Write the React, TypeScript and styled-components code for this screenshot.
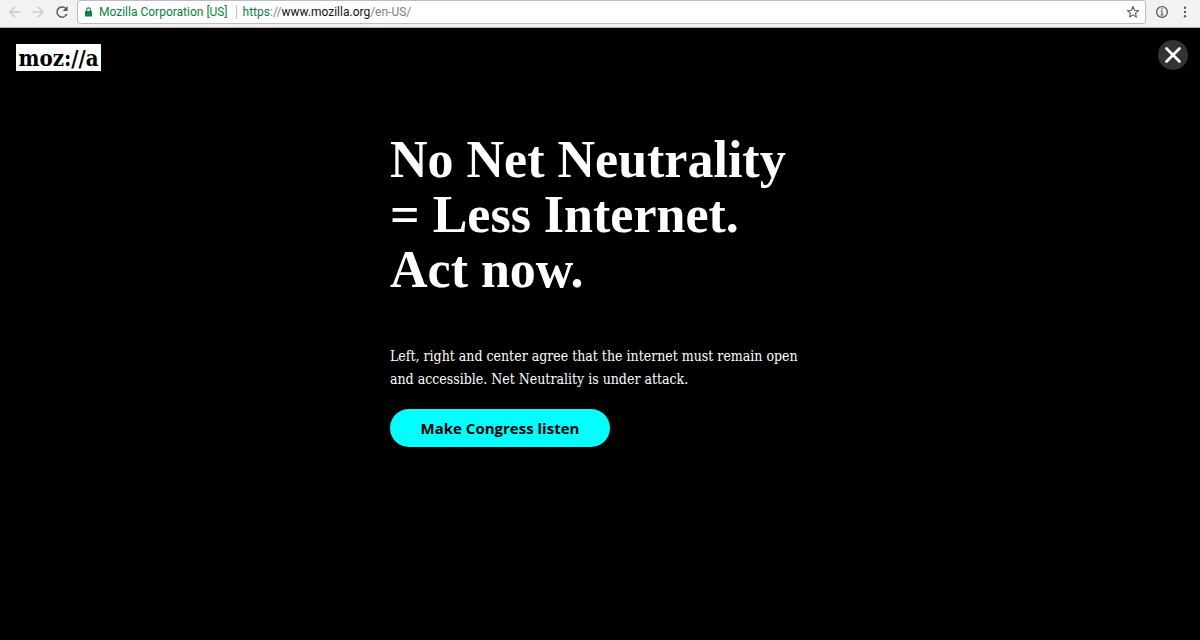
import React from "react";
import styled, { createGlobalStyle } from "styled-components";

const GlobalStyle = createGlobalStyle`
  * { box-sizing: border-box; }
  body { margin: 0; background: #000; }
  button { font: inherit; cursor: pointer; }
`;

const Page = styled.div`
  min-height: 100vh;
  background: #000;
  color: #fff;
`;

const BrowserBar = styled.header`
  display: flex;
  align-items: center;
  height: 28px;
  padding: 0 4px 4px 6px;
  background: #f2f2f2;
  border-bottom: 1px solid #b4b4b4;
  font-family: Roboto, sans-serif;
  font-size: 12px;
  line-height: 16px;
`;

const ToolButton = styled.button<{ $width?: number; $color?: string }>`
  display: flex;
  align-items: center;
  justify-content: center;
  flex: none;
  width: ${(p) => p.$width ?? 24}px;
  height: 22px;
  padding: 0;
  border: 0;
  background: none;
  color: ${(p) => p.$color ?? "#5a5a5a"};
`;

const AddressBar = styled.div`
  display: flex;
  align-items: center;
  flex: 1;
  min-width: 0;
  height: 24px;
  margin: 0 4px 0 5px;
  padding-left: 6px;
  background: #fff;
  border: 1px solid #bcbcbc;
  border-radius: 3px;
`;

const SiteIdentity = styled.button`
  display: flex;
  align-items: center;
  gap: 6px;
  flex: none;
  height: 14px;
  padding: 0 8px 0 0;
  border: 0;
  border-right: 1px solid #c4c4c4;
  background: none;
  color: #0b8043;
`;

const Url = styled.div`
  flex: 1;
  min-width: 0;
  padding-left: 6px;
  overflow: hidden;
  white-space: nowrap;
  color: #111;
`;

const UrlPart = styled.span<{ $tone: "secure" | "muted" }>`
  color: ${(p) => (p.$tone === "secure" ? "#0b8043" : "#808080")};
`;

const SiteHeader = styled.div`
  display: flex;
  align-items: flex-start;
  justify-content: space-between;
  padding: 12px 12px 0 16px;
`;

const Logo = styled.a`
  display: flex;
  align-items: center;
  justify-content: center;
  width: 85px;
  height: 27px;
  margin-top: 4px;
  background: #fff;
  color: #000;
  font: 700 22px/26px "DejaVu Serif Condensed", "DejaVu Serif", serif;
  text-decoration: none;
`;

const CloseButton = styled.button`
  display: flex;
  align-items: center;
  justify-content: center;
  width: 30px;
  height: 30px;
  padding: 0;
  border: 0;
  border-radius: 50%;
  background: #333;
  color: #fff;
`;

const Message = styled.main`
  width: 420px;
  max-width: calc(100% - 32px);
  margin: 61px auto 0;
  padding-bottom: 40px;
`;

const Title = styled.h1`
  margin: 0;
  font: 700 52px/55px "Liberation Serif", serif;
  white-space: nowrap;
`;

const Copy = styled.p`
  margin: 48px 0 18px;
  font: 400 14px/23px "DejaVu Serif Condensed", "DejaVu Serif", serif;
`;

const ActionButton = styled.button`
  display: block;
  width: 220px;
  height: 38px;
  padding: 0 0 1px;
  border: 0;
  border-radius: 19px;
  background: #0ff;
  color: #000;
  && {
    font: 700 15px/20px "Open Sans", sans-serif;
  }
`;

const Arrow = ({ forward = false }: { forward?: boolean }) => (
  <svg width="14" height="14" viewBox="0 0 14 14" fill="none" stroke="currentColor" strokeWidth="1.5" aria-hidden="true">
    <path d={forward ? "M1.5 7H12M7 2l5 5-5 5" : "M12.5 7H2M7 2L2 7l5 5"} />
  </svg>
);

export default function App() {
  return (
    <>
      <GlobalStyle />
      <Page>
        <BrowserBar>
          <ToolButton $width={18} $color="#cbcbcb" aria-label="Back"><Arrow /></ToolButton>
          <ToolButton $width={28} $color="#cbcbcb" aria-label="Forward"><Arrow forward /></ToolButton>
          <ToolButton $width={20} aria-label="Reload">
            <svg width="14" height="14" viewBox="0 0 14 14" fill="none" aria-hidden="true">
              <path d="M11.8 9A5.1 5.1 0 1 1 10.8 3.5" stroke="currentColor" strokeWidth="1.5" />
              <path d="M12.6 1v5H7.6z" fill="currentColor" />
            </svg>
          </ToolButton>
          <AddressBar>
            <SiteIdentity aria-label="Site information: Mozilla Corporation [US]">
              <svg width="9" height="12" viewBox="0 0 9 12" fill="none" aria-hidden="true">
                <rect x="1" y="5" width="7" height="5.5" rx="0.6" fill="currentColor" />
                <path d="M2.6 5V3.8a1.9 1.9 0 0 1 3.8 0V5" stroke="currentColor" strokeWidth="1.1" />
              </svg>
              Mozilla Corporation [US]
            </SiteIdentity>
            <Url role="textbox" tabIndex={0} aria-label="Address">
              <UrlPart $tone="secure">https</UrlPart>
              <UrlPart $tone="muted">://</UrlPart>www.mozilla.org<UrlPart $tone="muted">/en-US/</UrlPart>
            </Url>
            <ToolButton aria-label="Bookmark this page">
              <svg width="14" height="14" viewBox="0 0 14 14" fill="none" aria-hidden="true">
                <path d="M7 1.5l1.5 3.7 4 .3-3 2.6.9 3.9L7 9.9l-3.4 2.1.9-3.9-3-2.6 4-.3z" stroke="currentColor" strokeWidth="1.1" strokeLinejoin="round" />
              </svg>
            </ToolButton>
          </AddressBar>
          <ToolButton aria-label="Page details">
            <svg width="14" height="14" viewBox="0 0 14 14" fill="none" stroke="currentColor" aria-hidden="true">
              <circle cx="7" cy="7" r="5.4" strokeWidth="1.3" />
              <path d="M7 6v4M5.6 6H7M5.4 10h3.2" strokeWidth="1.1" />
              <circle cx="7" cy="4" r="0.5" fill="currentColor" strokeWidth="0.5" />
            </svg>
          </ToolButton>
          <ToolButton $width={22} aria-label="Browser menu">
            <svg width="4" height="14" viewBox="0 0 4 14" fill="currentColor" aria-hidden="true">
              <circle cx="2" cy="2.7" r="1.2" /><circle cx="2" cy="7" r="1.2" /><circle cx="2" cy="11.3" r="1.2" />
            </svg>
          </ToolButton>
        </BrowserBar>

        <SiteHeader>
          <Logo href="#">moz://a</Logo>
          <CloseButton aria-label="Close">
            <svg width="18" height="18" viewBox="0 0 18 18" stroke="currentColor" strokeWidth="2.8" strokeLinecap="round" aria-hidden="true">
              <path d="M2.5 2.5l13 13M15.5 2.5l-13 13" />
            </svg>
          </CloseButton>
        </SiteHeader>

        <Message>
          <Title>No Net Neutrality<br />= Less Internet.<br />Act now.</Title>
          <Copy>Left, right and center agree that the internet must remain open and accessible. Net Neutrality is under attack.</Copy>
          <ActionButton>Make Congress listen</ActionButton>
        </Message>
      </Page>
    </>
  );
}
